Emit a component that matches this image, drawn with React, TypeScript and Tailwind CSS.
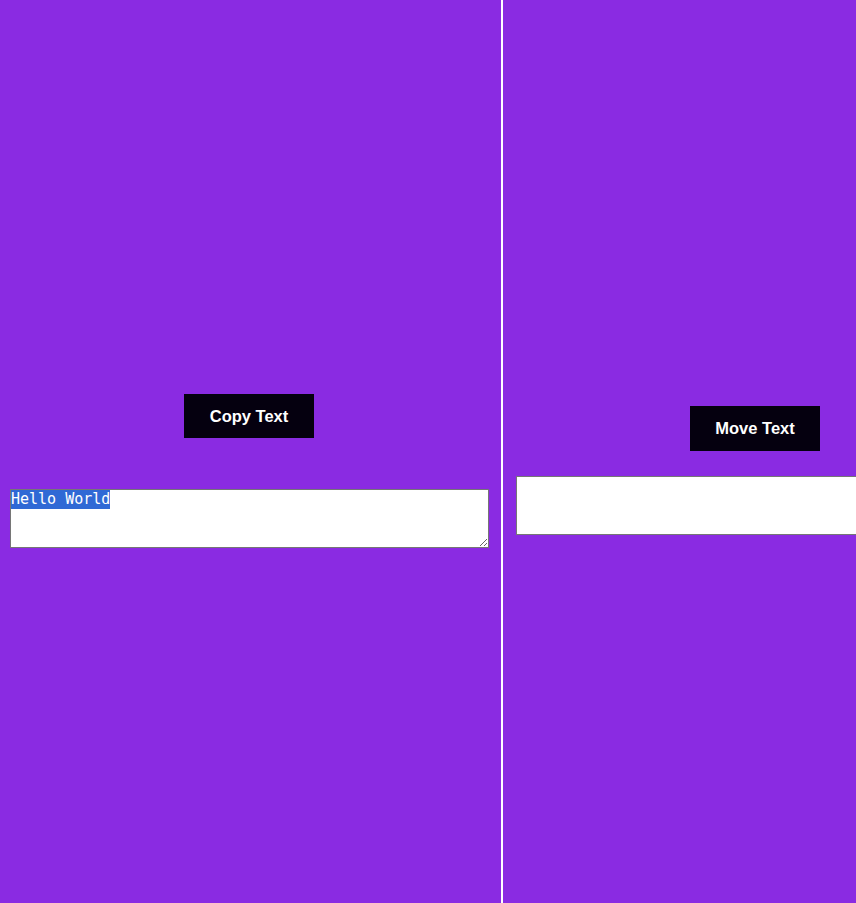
import React, { useEffect, useRef } from "react";

export default function App() {
  const ref = useRef<HTMLTextAreaElement>(null);
  useEffect(() => {
    const t = ref.current;
    if (t) {
      t.focus();
      t.setSelectionRange(0, t.value.length);
    }
  }, []);
  return (
    <div className="flex h-[903px] w-[856px] overflow-hidden bg-[#8a2be2]">
      <div className="flex w-[503px] shrink-0 flex-col items-start border-r-2 border-white pt-[394px]">
        <button className="ml-[184px] h-[44px] w-[130px] bg-[#05000f] text-[16.5px] font-bold text-white [font-family:'Liberation_Sans',Arial,sans-serif]">
          Copy Text
        </button>
        <textarea
          ref={ref}
          defaultValue="Hello World"
          className="mt-[51px] ml-[10px] h-[59px] w-[479px] border border-[#767676] bg-white p-0 text-[15px] leading-[19px] text-black outline-none [font-family:'DejaVu_Sans_Mono',monospace] selection:bg-[#2f69d5] selection:text-white"
        />
      </div>
      <div className="flex w-[504px] shrink-0 flex-col items-start pt-[406px]">
        <button className="ml-[187px] h-[45px] w-[130px] bg-[#05000f] text-[16.5px] font-bold text-white [font-family:'Liberation_Sans',Arial,sans-serif]">
          Move Text
        </button>
        <input
          type="text"
          className="mt-[25px] ml-[13px] h-[59px] w-[478px] border border-[#767676] bg-white p-0 outline-none"
        />
      </div>
    </div>
  );
}
